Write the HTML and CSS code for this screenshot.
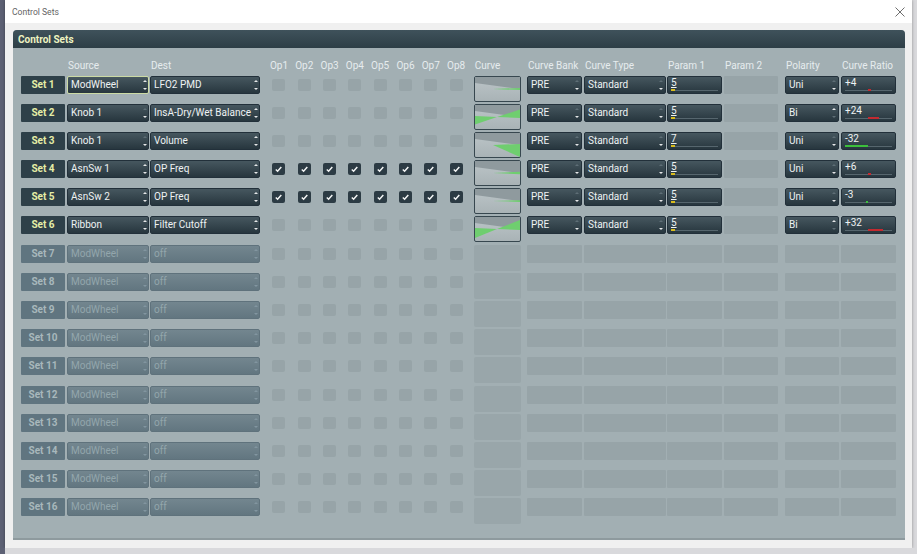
FILE: index.html
```html
<!DOCTYPE html>
<html lang="en">
<head>
    <meta charset="UTF-8">
    <meta name="viewport" content="width=device-width, initial-scale=1.0">
    <title>Control Sets</title>
    <link rel="stylesheet" href="styles.css">
</head>
<body>
    <div class="dialog">
        <div class="titlebar">
            <span class="title">Control Sets</span>
            <svg class="close" width="10" height="10" viewBox="0 0 10 10">
                <path d="M0.5,0.5 L9.5,9.5 M9.5,0.5 L0.5,9.5" stroke="#6e6e6e" stroke-width="1" fill="none"/>
            </svg>
        </div>
        <div class="frame">
            <div class="panel">
                <div class="panel-head">Control Sets</div>
                <div class="grid" id="grid">
                    <div class="hd"></div>
                    <div class="hd">Source</div>
                    <div class="hd">Dest</div>
                    <div class="hd c">Op1</div>
                    <div class="hd c">Op2</div>
                    <div class="hd c">Op3</div>
                    <div class="hd c">Op4</div>
                    <div class="hd c">Op5</div>
                    <div class="hd c">Op6</div>
                    <div class="hd c">Op7</div>
                    <div class="hd c">Op8</div>
                    <div class="hd curve-hd">Curve</div>
                    <div class="hd">Curve Bank</div>
                    <div class="hd">Curve Type</div>
                    <div class="hd">Param 1</div>
                    <div class="hd">Param 2</div>
                    <div class="hd">Polarity</div>
                    <div class="hd">Curve Ratio</div>
                </div>
            </div>
        </div>
    </div>

    <script src="app.js"></script>
</body>
</html>
```

FILE: styles.css
```css
body {
    margin: 0;
    background: linear-gradient(90deg, #5d6174 5px, #d9d9dc 5px);
    font-family: Roboto, "Liberation Sans", sans-serif;
    font-size: 10px;
    overflow: hidden;
}

.dialog {
    margin-left: 5px;
    width: 907px;
    height: 548px;
    background-color: #f0f0f0;
    box-shadow: 0 0 3px rgba(0, 0, 0, 0.35);
    display: flex;
    flex-direction: column;
}

.titlebar {
    height: 23px;
    background-color: #ffffff;
    display: flex;
    align-items: center;
    justify-content: space-between;
    padding: 0 7px 0 7px;
    color: #646464;
    font-size: 8.6px;
}

.frame {
    flex: 1;
    padding: 7px 7px 8px 8px;
}

.panel {
    height: 510px;
    background-color: #a2afb3;
    border-radius: 4px 4px 0 0;
    box-shadow: inset 0 -2px 0 #8e9a9e;
}

.panel-head {
    height: 18px;
    line-height: 19px;
    padding-left: 5px;
    background: linear-gradient(#3f525b, #2d3e46);
    color: #eef3c0;
    font-weight: bold;
    border-radius: 4px 4px 0 0;
}

.grid {
    display: grid;
    grid-template-columns: 46px 83px 116.35px repeat(8, 25.3px) 58.25px 57px 83px 57px 61px 56px 55px;
    grid-template-rows: 27.5px repeat(16, 28.2px);
    align-items: start;
    padding-left: 8px;
}

.hd {
    color: #e6ecee;
    padding: 11px 0 0 1px;
    line-height: 14px;
    white-space: nowrap;
}

.hd.c {
    text-align: center;
    padding-left: 0;
}

.hd.curve-hd {
    padding-left: 6px;
}

/* set label */
.set {
    width: 44px;
    height: 18px;
    line-height: 18px;
    text-align: center;
    font-weight: bold;
    background-color: #2e4049;
    color: #e5eda6;
    border-radius: 1px;
}

.set.off {
    background-color: #607580;
    color: #a8b8bc;
}

/* dropdowns / fields */
.ctl {
    height: 18px;
    box-sizing: border-box;
    display: flex;
    background: linear-gradient(#46575f, #27363e);
    border: 1px solid #22303a;
    border-radius: 2px;
    color: #eef2f3;
}

.ctl.focus {
    border-color: #cbdaa4;
}

.ctl.off {
    background: linear-gradient(#73868f, #627680);
    border-color: #5f727c;
    color: #93a6ac;
}

.ctl .val {
    flex: 1;
    padding-left: 3px;
    line-height: 15px;
    white-space: nowrap;
    overflow: hidden;
}

.spin {
    width: 7px;
    display: flex;
    flex-direction: column;
    justify-content: space-between;
    align-items: center;
    padding: 3px 0;
}

.up {
    border-left: 2px solid transparent;
    border-right: 2px solid transparent;
    border-bottom: 2px solid #e6e8e9;
}

.dn {
    border-left: 2px solid transparent;
    border-right: 2px solid transparent;
    border-top: 2px solid #e6e8e9;
}

.up.dim {
    border-bottom-color: #5e6e76;
}

.dn.dim {
    border-top-color: #5e6e76;
}

.off .up {
    border-bottom-color: #8295a0;
}

.off .dn {
    border-top-color: #8295a0;
}

.w44 { width: 44px; }
.w54 { width: 54px; }
.w55 { width: 55px; }
.w82 { width: 82px; }
.w110 { width: 110px; }

/* number fields with slider track */
.num {
    flex-direction: column;
}

.num .val {
    flex: none;
    line-height: 12px;
}

.num .val span {
    text-decoration: underline;
}

.track {
    position: relative;
    height: 1px;
    margin: 1px 3px 0;
    background-color: #56666e;
}

.mark {
    position: absolute;
    top: -1px;
    height: 2px;
    background-color: #d8bc1c;
}

.mark.pos {
    background-color: #c42a30;
}

.mark.neg {
    background-color: #3cbf3c;
}

/* op checkboxes */
.cb {
    justify-self: center;
    width: 13px;
    height: 12px;
    margin-top: 3px;
    border-radius: 2px;
    background-color: #2c3b44;
    display: flex;
    align-items: center;
    justify-content: center;
}

.cb.off {
    background-color: #97a4a8;
}

/* curve preview */
.curve {
    justify-self: center;
    width: 47px;
    height: 26px;
    box-sizing: border-box;
    border: 1px solid #37474f;
    border-radius: 2px;
    background: linear-gradient(#bcc5c8, #a9b3b6);
    overflow: hidden;
}

.curve svg {
    display: block;
}

.curve.off {
    border: none;
    background: #99a6aa;
}

.slot {
    height: 18px;
    background-color: #97a4a8;
    border-radius: 1px;
}
```

FILE: app.js
```js
const sets = [
    { src: 'ModWheel', srcUp: true, dest: 'LFO2 PMD', ops: false, p1: 5, pol: 'Uni', ratio: 4, focus: true },
    { src: 'Knob 1', srcUp: false, dest: 'InsA-Dry/Wet Balance', ops: false, p1: 5, pol: 'Bi', ratio: 24 },
    { src: 'Knob 1', srcUp: false, dest: 'Volume', ops: false, p1: 7, pol: 'Uni', ratio: -32 },
    { src: 'AsnSw 1', srcUp: true, dest: 'OP Freq', ops: true, p1: 5, pol: 'Uni', ratio: 6 },
    { src: 'AsnSw 2', srcUp: true, dest: 'OP Freq', ops: true, p1: 5, pol: 'Uni', ratio: -3 },
    { src: 'Ribbon', srcUp: true, dest: 'Filter Cutoff', ops: false, p1: 5, pol: 'Bi', ratio: 32 }
];

const check = '<svg width="9" height="8" viewBox="0 0 9 8"><polyline points="1.8,4.5 3.6,6.2 7.3,2" fill="none" stroke="#f4f6f6" stroke-width="1.5"/></svg>';

function spin(upOn, dnOn) {
    return `<div class="spin"><i class="up${upOn ? '' : ' dim'}"></i><i class="dn${dnOn ? '' : ' dim'}"></i></div>`;
}

function dropdown(cls, text, upOn, dnOn) {
    return `<div class="ctl ${cls}"><div class="val">${text}</div>${spin(upOn, dnOn)}</div>`;
}

// small preview of the response curve
function curveSvg(pol, ratio) {
    const k = Math.abs(ratio) / 32;
    let shapes = '<polygon points="0,0 45,0 45,12 0,6" fill="#8f9a9e"/>';
    if (pol === 'Bi') {
        const d = 3 + 6 * k;
        shapes += `<polygon points="0,11 0,${12 + d} 22,12" fill="#6fce6f"/>`;
        shapes += `<polygon points="22,12 45,${12 - d} 45,13" fill="#6fce6f"/>`;
    } else if (ratio < -10) {
        shapes += '<polygon points="18,12 45,11 45,24" fill="#6fce6f"/>';
    } else {
        shapes += `<polygon points="18,12 45,${11.5 - k * 4} 45,${12.5 + k * 4}" fill="#6fce6f"/>`;
    }
    return `<svg width="45" height="24" viewBox="0 0 45 24">${shapes}</svg>`;
}

function ratioBar(ratio) {
    // bar grows out of the centre of the track
    const len = ratio >= 0 ? Math.max(3, ratio * 0.47) : Math.max(2, -ratio * 0.72);
    const left = ratio >= 0 ? 23 : 23 - len;
    const cls = ratio >= 0 ? 'pos' : 'neg';
    return `<div class="mark ${cls}" style="left:${left}px;width:${len}px"></div>`;
}

function buildRow(i, s) {
    let html = '';
    if (s) {
        html += `<div class="set">Set ${i}</div>`;
        html += dropdown('w82' + (s.focus ? ' focus' : ''), s.src, s.srcUp, true);
        html += dropdown('w110', s.dest, true, true);
        for (let op = 0; op < 8; op++) {
            html += s.ops ? `<div class="cb">${check}</div>` : '<div class="cb off"></div>';
        }
        html += `<div class="curve">${curveSvg(s.pol, s.ratio)}</div>`;
        html += dropdown('w55', 'PRE', false, true);
        html += dropdown('w82', 'Standard', false, true);
        html += `<div class="ctl num w55"><div class="val"><span>${s.p1}</span></div><div class="track"><div class="mark" style="left:0;width:4px"></div></div></div>`;
        html += '<div class="slot w54"></div>';
        html += dropdown('w54', s.pol, s.pol === 'Bi', s.pol === 'Uni');
        const txt = s.ratio > 0 ? '+' + s.ratio : String(s.ratio);
        html += `<div class="ctl num w55"><div class="val">${txt}</div><div class="track">${ratioBar(s.ratio)}</div></div>`;
    } else {
        html += `<div class="set off">Set ${i}</div>`;
        html += dropdown('w82 off', 'ModWheel', true, true);
        html += dropdown('w110 off', 'off', true, true);
        for (let op = 0; op < 8; op++) {
            html += '<div class="cb off"></div>';
        }
        html += '<div class="curve off"></div>';
        html += '<div class="slot w55"></div>';
        html += '<div class="slot w82"></div>';
        html += '<div class="slot w55"></div>';
        html += '<div class="slot w54"></div>';
        html += '<div class="slot w54"></div>';
        html += '<div class="slot w55"></div>';
    }
    return html;
}

const grid = document.getElementById('grid');
let rowsHtml = '';
for (let i = 1; i <= 16; i++) {
    rowsHtml += buildRow(i, sets[i - 1]);
}
grid.insertAdjacentHTML('beforeend', rowsHtml);
```
